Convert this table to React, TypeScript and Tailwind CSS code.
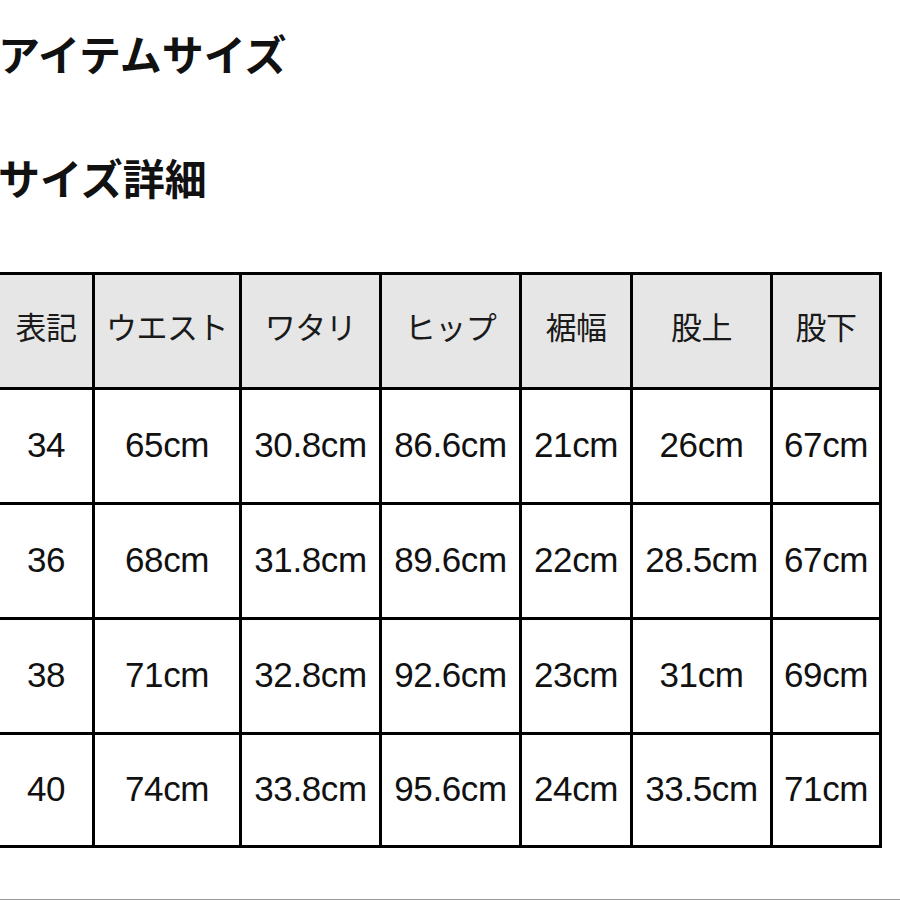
import React from 'react';

const widths = ['w-[95px]', 'w-[147px]', 'w-[140px]', 'w-[140px]', 'w-[111px]', 'w-[140px]', 'w-[109px]'];

const headers = ['表記', 'ウエスト', 'ワタリ', 'ヒップ', '裾幅', '股上', '股下'];

const rows = [
  ['34', '65cm', '30.8cm', '86.6cm', '21cm', '26cm', '67cm'],
  ['36', '68cm', '31.8cm', '89.6cm', '22cm', '28.5cm', '67cm'],
  ['38', '71cm', '32.8cm', '92.6cm', '23cm', '31cm', '69cm'],
  ['40', '74cm', '33.8cm', '95.6cm', '24cm', '33.5cm', '71cm'],
];

const jp = { fontFamily: '"Noto Sans CJK JP", "Noto Sans", sans-serif' };
const num = { fontFamily: '"Liberation Sans", Arial, sans-serif' };

export default function App() {
  return (
    <div className="h-[900px] w-[900px] overflow-hidden bg-white border-b border-[#9a9a9a] text-[#111]">
      <h1 style={jp} className="ml-[-2px] pt-[26px] text-[42px] font-bold leading-[54px] tracking-[0px]">
        アイテムサイズ
      </h1>
      <h2 style={jp} className="ml-[-2px] mt-[70px] text-[42px] font-bold leading-[54px] tracking-[0px]">
        サイズ詳細
      </h2>
      <div className="ml-[-3px] mt-[68px] w-max border-t-[3px] border-l-[3px] border-black">
        <div className="flex">
          {headers.map((h, i) => (
            <div
              key={h}
              style={jp}
              className={`${widths[i]} h-[115px] pb-[10px] flex items-center justify-center border-r-[3px] border-b-[3px] border-black bg-[#e6e6e6] text-[31px] text-[#1a1a1a] tracking-[-0.5px]`}
            >
              {h}
            </div>
          ))}
        </div>
        {rows.map((r, ri) => (
          <div key={ri} className="flex">
            {r.map((c, i) => (
              <div
                key={i}
                style={num}
                className={`${widths[i]} ${ri === rows.length - 1 ? 'h-[113px]' : 'h-[115px]'} pb-[2px] flex items-center justify-center border-r-[3px] border-b-[3px] border-black text-[35px] text-[#111] tracking-[-0.4px]`}
              >
                {c}
              </div>
            ))}
          </div>
        ))}
      </div>
    </div>
  );
}
